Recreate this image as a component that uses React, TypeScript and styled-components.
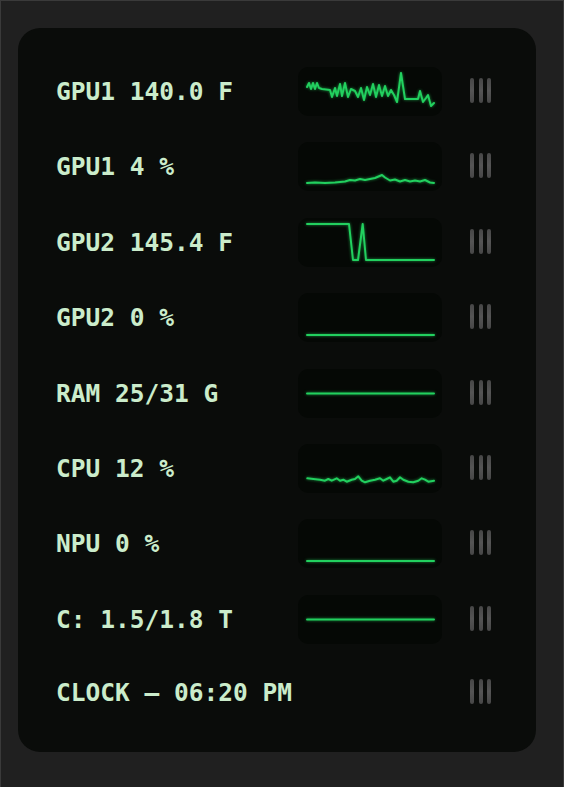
import styled, { createGlobalStyle } from "styled-components";

const GlobalStyle = createGlobalStyle`
  html, body {
    margin: 0;
    padding: 0;
    background: #202020;
  }
`;

const Screen = styled.div`
  box-sizing: border-box;
  width: 564px;
  height: 787px;
  padding: 28px 0 0 18px;
  background: #202020;
  border: 1px solid #3a3a3a;
  border-bottom: none;
  overflow: hidden;
`;

const Panel = styled.div`
  box-sizing: border-box;
  width: 518px;
  height: 724px;
  margin-left: -1px;
  margin-top: -1px;
  padding: 39px 0 0 38px;
  background: #0a0c0a;
  border-radius: 22px;
  display: flex;
  flex-direction: column;
  gap: 26.4px;
`;

const Row = styled.div<{ $compact?: boolean }>`
  display: flex;
  align-items: center;
  height: ${(p) => (p.$compact ? "44px" : "49px")};
`;

const Label = styled.span`
  flex: 0 0 242px;
  font-family: "DejaVu Sans Mono", "Liberation Mono", monospace;
  font-weight: bold;
  font-size: 24.5px;
  color: #cbeccb;
  white-space: nowrap;
`;

const GraphBox = styled.div`
  flex: 0 0 144px;
  height: 49px;
  border-radius: 10px;
  background: #050805;

  svg {
    display: block;
    overflow: visible;
  }
`;

const GraphSlot = styled.div`
  flex: 0 0 144px;
`;

const Handle = styled.div`
  display: flex;
  gap: 4.5px;
  margin-left: 28px;
  margin-top: -2px;
`;

const Bar = styled.span`
  width: 4px;
  height: 25px;
  border-radius: 2px;
  background: linear-gradient(#474747, #555555 50%, #474747);
`;

type Metric = {
  label: string;
  points?: [number, number][];
};

const flat = (y: number): [number, number][] => [
  [9, y],
  [136, y],
];

const metrics: Metric[] = [
  {
    label: "GPU1 140.0 F",
    points: [
      [9, 20], [11, 16], [13, 22], [15, 16], [17, 22], [19, 16], [21, 21], [24, 22],
      [32, 23], [34, 30], [37, 21], [39, 29], [42, 17], [44, 29], [47, 16], [50, 30],
      [53, 22], [57, 24], [60, 30], [63, 21], [66, 33], [69, 20], [72, 28], [75, 17],
      [78, 30], [81, 18], [84, 29], [87, 19], [90, 29], [93, 23], [96, 28], [99, 35],
      [103, 6], [107, 32], [120, 32], [122, 24], [125, 35], [128, 31], [130, 28],
      [133, 39], [136, 36],
    ],
  },
  {
    label: "GPU1 4 %",
    points: [
      [9, 41], [17, 40.5], [27, 41], [37, 40.5], [47, 39.5], [52, 38], [57, 38.5],
      [62, 37], [67, 38], [72, 37], [77, 36], [84, 33], [87, 35.5], [92, 38.5],
      [97, 37.5], [102, 39.5], [107, 38], [112, 39.5], [117, 38.5], [122, 39.5],
      [127, 38], [132, 40.5], [136, 41],
    ],
  },
  {
    label: "GPU2 145.4 F",
    points: [
      [9, 6], [51, 6], [55, 42], [60, 42], [64.7, 6], [68, 42], [136, 42],
    ],
  },
  { label: "GPU2 0 %", points: flat(42) },
  { label: "RAM 25/31 G", points: flat(24.5) },
  {
    label: "CPU 12 %",
    points: [
      [9.3, 34.3], [15.3, 35], [22, 35.7], [27, 36.7], [30.3, 35], [33.7, 36.7],
      [38.7, 34.3], [42, 36.7], [45.3, 35.7], [48.7, 37.7], [53.7, 35.7], [57, 35],
      [60.3, 32.3], [63.7, 36.7], [67, 38.3], [72, 36.7], [77, 35.7], [82, 34.3],
      [85.3, 36.7], [88.7, 35], [92, 33.3], [95.3, 37.7], [98.7, 36.7], [102, 33.3],
      [105.3, 35.7], [110.3, 37.7], [115.3, 38.3], [120.3, 36.7], [123.7, 34.3],
      [127, 35.7], [130.3, 37.7], [136, 36.7],
    ],
  },
  { label: "NPU 0 %", points: flat(42) },
  { label: "C: 1.5/1.8 T", points: flat(24.5) },
  { label: "CLOCK – 06:20 PM" },
];

const Sparkline = ({ points }: { points: [number, number][] }) => {
  const d = points.map(([x, y], i) => `${i ? "L" : "M"}${x} ${y}`).join(" ");
  return (
    <svg width={144} height={49} viewBox="0 0 144 49">
      <path
        d={d}
        fill="none"
        stroke="#22d05f"
        strokeWidth={2}
        strokeLinejoin="round"
        strokeLinecap="round"
        style={{ filter: "drop-shadow(0 0 1.5px rgba(40, 255, 110, 0.55))" }}
      />
    </svg>
  );
};

const DragHandle = () => (
  <Handle>
    <Bar />
    <Bar />
    <Bar />
  </Handle>
);

const App = () => {
  return (
    <>
      <GlobalStyle />
      <Screen>
        <Panel>
          {metrics.map((m) => (
            <Row key={m.label} $compact={!m.points}>
              <Label>{m.label}</Label>
              {m.points ? (
                <GraphBox>
                  <Sparkline points={m.points} />
                </GraphBox>
              ) : (
                <GraphSlot />
              )}
              <DragHandle />
            </Row>
          ))}
        </Panel>
      </Screen>
    </>
  );
};

export default App;
